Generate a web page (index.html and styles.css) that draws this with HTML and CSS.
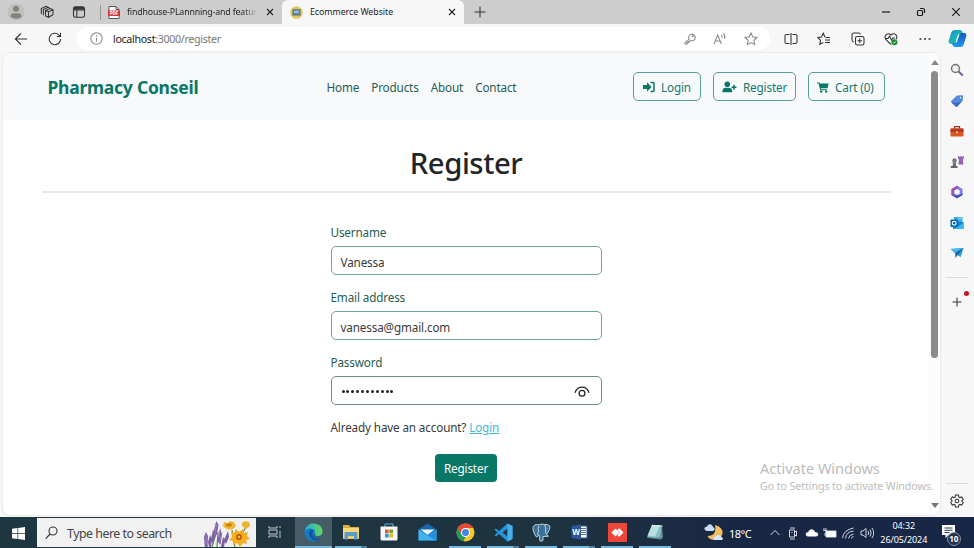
FILE: index.html
```html
<!DOCTYPE html>
<html lang="en">
<head>
<meta charset="utf-8">
<title>Ecommerce Website</title>
<link rel="stylesheet" href="styles.css">
</head>
<body>
<div class="screen">
  <header class="tabs">
    <div class="tab-tools">
      <svg width="18" height="18" viewBox="0 0 18 18"><circle cx="9" cy="9" r="8.5" fill="#c2c0bd"/><circle cx="9" cy="5.8" r="3" fill="#85827e"/><path d="M3.5 14q0-3.8 3-3.8h5q3 0 3 3.8-5 3.4-11 0z" fill="#85827e"/></svg>
      <svg width="14" height="14" viewBox="0 0 14 14" class="line"><path d="M5.5 5.500 10 3.500l3 1.200v5L8.500 12.300l-3-1.300zM5.500 5.500l3 1.200L13 4.700M8.500 6.700v5.500M3.400 10.200V4.600L8 2.300l1.500.5M1.300 9V3.600L6 1.200l1.500.5"/></svg>
      <svg width="14" height="14" viewBox="0 0 14 14" class="line"><rect x="1.500" y="1.700" width="11" height="10.600" rx="2"/><path d="M4.800 5v7M2 5h10" /><path d="M2 3.300h10" stroke-width="2.600"/></svg>
    </div>
    <div class="tab tab-old">
      <svg width="12" height="13" viewBox="0 0 12 13"><path d="M1 .5h7l3 3v9H1z" fill="#fff" stroke="#555"/><path d="M8 .5v3h3" fill="none" stroke="#555"/><path d="M0 4.500h12v5.500H0z" fill="#e02e35"/><text x="6" y="9" class="pdf">PDF</text></svg>
      <span class="tab-title old-title">findhouse-PLannning-and featur</span>
      <svg class="close" width="8" height="8" viewBox="0 0 8 8"><path d="m1 1 6 6M7 1 1 7"/></svg>
    </div>
    <div class="tab tab-current">
      <svg width="13" height="13" viewBox="0 0 13 13"><circle cx="6.500" cy="6.500" r="6.300" fill="#eac55e"/><rect x="2.800" y="3.500" width="7.400" height="5" rx=".5" fill="#4f86b7" stroke="#5b6771" stroke-width=".6"/><path d="M4 4.600h5v2.500H4z" fill="#8bc1df"/><path d="M2 9h9" stroke="#5d7180"/></svg>
      <span class="tab-title">Ecommerce Website</span>
      <svg class="close" width="8" height="8" viewBox="0 0 8 8"><path d="m1 1 6 6M7 1 1 7"/></svg>
    </div>
    <svg class="line newtab" width="12" height="12" viewBox="0 0 12 12"><path d="M6 .5v11M.5 6h11"/></svg>
    <div class="window-buttons">
      <svg width="10" height="10" viewBox="0 0 10 10"><path d="M1 5h8"/></svg>
      <svg width="10" height="10" viewBox="0 0 10 10"><rect x="1.500" y="3.500" width="5" height="5" rx="1"/><path d="M4 1.500h3q1.500 0 1.500 1.500v3"/></svg>
      <svg width="10" height="10" viewBox="0 0 10 10"><path d="m1.200 1.200 7.600 7.600M8.800 1.200 1.200 8.800"/></svg>
    </div>
  </header>

  <div class="toolbar">
    <svg class="line back" width="14" height="14" viewBox="0 0 14 14"><path d="M13 7H1.300M7 1.500 1.300 7 7 12.500"/></svg>
    <svg class="line reload" width="14" height="14" viewBox="0 0 14 14"><path d="M12.600 7A5.700 5.700 0 1 1 10.800 2.800L12.500 4.400M12.500.7v3.700H8.800"/></svg>
    <div class="address">
      <svg class="line grey" width="13" height="13" viewBox="0 0 13 13"><circle cx="6.500" cy="6.500" r="5.700"/><path d="M6.500 5.800v3.700M6.500 3.300v1.200"/></svg>
      <span class="url">localhost<span>:3000/register</span></span>
      <div class="address-icons">
        <svg class="line grey" width="12" height="12" viewBox="0 0 12 12"><path d="M5.100 6.100A3.300 3.300 0 1 1 6.600 7.500l-.9.900H4.600v1.200H3.300v1.300H1V9.800z"/><circle cx="8.800" cy="3.200" r=".5"/></svg>
        <svg class="line grey" width="14" height="12" viewBox="0 0 14 12"><path d="M1 11 4.700 2 8.400 11M2.300 8h4.800M8.200 2q1.300 1.300.8 3M10.300.7q2.500 2.400 1.300 5.300"/></svg>
        <svg class="line grey" width="14" height="14" viewBox="0 0 14 14"><path d="m7 1 1.800 3.900 4.200.5-3.100 2.900.8 4.300L7 10.500l-3.700 2.100.8-4.300L1 5.400l4.200-.5z"/></svg>
      </div>
    </div>
    <div class="browser-icons">
      <svg class="line" width="14" height="14" viewBox="0 0 14 14"><path d="M5.500 2.500h-3Q1 2.500 1 4v6q0 1.500 1.500 1.500h3M8.500 2.500h3Q13 2.500 13 4v6q0 1.500-1.500 1.500h-3M7 1v12"/></svg>
      <svg class="line" width="14" height="14" viewBox="0 0 14 14"><path d="M8 5 6.200 1.200 4.500 5l-3.800.5 2.800 2.800-.7 4L6.200 10.500M8.500 5.500H13M8 8h5M8 10.500h5"/></svg>
      <svg class="line" width="14" height="14" viewBox="0 0 14 14"><rect x="4.500" y="4.500" width="8.500" height="8.500" rx="1.800"/><path d="M8.700 6.500v4.500M6.500 8.700H11M2.800 10Q1 9.500 1 8V3q0-2 2-2h4.500q1.500 0 2 1.500"/></svg>
      <svg class="line" width="14" height="14" viewBox="0 0 14 14"><path d="M7 12.500 2 7.700Q0 5 2 2.800 4.500.6 7 3q2.500-2.400 5-.2 1.600 2 .2 4.400M1.500 6.500H4L5.500 4l2 4 1.500-2h2"/><circle cx="10.400" cy="10.300" r="3" fill="#168b28" stroke="none"/><path d="m9 10.300 1 1 1.800-2" stroke="#fff" stroke-width=".8"/></svg>
      <svg width="14" height="14" viewBox="0 0 14 14"><path d="M1.500 6.300h2v1.500h-2zM6 6.300h2v1.500H6zM10.500 6.300h2v1.500h-2z" fill="#333"/></svg>
      <svg class="copilot" width="19" height="19" viewBox="0 0 19 19"><defs><linearGradient id="cop" x2="1" y2="1"><stop stop-color="#1b88dc"/><stop offset=".5" stop-color="#17b6b3"/><stop offset="1" stop-color="#37bd7e"/></linearGradient><linearGradient id="cop2" x2="0" y2="1"><stop stop-color="#135bb9"/><stop offset="1" stop-color="#2399f1"/></linearGradient></defs><path d="M6.500 1H12q2 0 2.500 2l.6 2h-2.800q-2 0-2.600 2l-1.900 6q-.7 2-2.800 2H3Q-.1 15 .8 11.400L3.300 3.500Q4 1 6.500 1z" fill="url(#cop)"/><path d="M12.500 18H7q-2 0-2.500-2L4 14h2.700q2 0 2.600-2l1.900-6q.7-2 2.800-2h2q3.100 0 2.200 3.600l-2.500 7.900Q15 18 12.500 18z" fill="url(#cop2)"/><path d="m8 12 2.200-6.500h1L9 12z" fill="#e8ffff"/></svg>
    </div>
  </div>

  <div class="main">
    <div class="viewport">
      <main class="page">
        <nav class="navbar">
          <strong class="brand">Pharmacy Conseil</strong>
          <div class="links"><a>Home</a><a>Products</a><a>About</a><a>Contact</a></div>
          <div class="actions">
            <a class="outline login"><svg width="13" height="12" viewBox="0 0 13 12"><path d="M1 4h4V1.300L9.600 6 5 10.700V8H1z" fill="#087766"/><path d="M8.500 1.500H11q1 0 1 1v7q0 1-1 1H8.500" fill="none" stroke="#087766" stroke-width="1.500"/></svg><span>Login</span></a>
            <a class="outline register"><svg width="15" height="12" viewBox="0 0 15 12"><circle cx="5.300" cy="3.300" r="2.800" fill="#087766"/><path d="M.5 11.300V9.500Q.7 7 3.300 6.700h4Q10 7 10.200 9.500v1.800z" fill="#087766"/><path d="M12 3.800v5M9.500 6.300h5" stroke="#087766" stroke-width="1.500"/></svg><span>Register</span></a>
            <a class="outline cart"><svg width="12" height="11" viewBox="0 0 12 11"><path d="M0 .4h2.300l.3 1.200h9.100L10.500 6.200H3.700l.2 1h6.300l-.3 1H3.100L1.600 1.600H0z" fill="#087766"/><circle cx="4.200" cy="9.600" r="1.200" fill="#087766"/><circle cx="9.200" cy="9.600" r="1.200" fill="#087766"/></svg><span>Cart (0)</span></a>
          </div>
        </nav>
        <h1>Register</h1>
        <hr>
        <form class="form">
          <label>Username</label>
          <div class="field">Vanessa</div>
          <label>Email address</label>
          <div class="field">vanessa@gmail.com</div>
          <label>Password</label>
          <div class="field password"><span class="dots"><i></i><i></i><i></i><i></i><i></i><i></i><i></i><i></i><i></i><i></i><i></i></span><svg width="16" height="12" viewBox="0 0 16 12"><path d="M1 6.700Q3 1.200 8 1.200t7 5.500" fill="none" stroke="#222" stroke-width="1.300"/><circle cx="8" cy="7.200" r="2.900" fill="none" stroke="#222" stroke-width="1.300"/></svg></div>
          <p class="account">Already have an account? <a>Login</a></p>
          <button type="button">Register</button>
        </form>
      </main>
      <div class="scrollbar"><i class="up"></i><b></b><i class="down"></i></div>
      <div class="watermark"><strong>Activate Windows</strong><span>Go to Settings to activate Windows.</span></div>
    </div>
    <aside class="sidebar">
      <div class="apps">
        <svg width="14" height="14" viewBox="0 0 14 14"><circle cx="5.500" cy="5.500" r="4" fill="#eee" stroke="#777" stroke-width="1.500"/><path d="m8.500 8.500 4.300 4" stroke="#76569d" stroke-width="1.900"/></svg>
        <svg width="14" height="14" viewBox="0 0 14 14"><path d="m7 1.500 5.500-.3q.6 0 .6.600l-.4 5-5.500 5.800q-.7.600-1.300 0L1.200 8.200q-.6-.6 0-1.200z" fill="#578ad8"/><path d="M1.200 8.200 6 12.700q.6.300 1.200-.3l4.500-4.700L5.500 9z" fill="#3c67c4"/><circle cx="10.600" cy="3.600" r=".8" fill="#fff"/></svg>
        <svg width="14" height="14" viewBox="0 0 14 14"><path d="M4.500 4.500V2.700h5v1.800" fill="none" stroke="#9c3519" stroke-width="1.300"/><rect x=".5" y="4.500" width="13" height="8" rx="1" fill="#d95724"/><path d="M.5 5.500q0-1 1-1h11q1 0 1 1V8H.5z" fill="#b53c1c"/><path d="M6.200 7.200h1.600v2H6.200z" fill="#f9c693"/></svg>
        <svg width="14" height="14" viewBox="0 0 14 14"><path d="M8 1h1.300v1h1V1h1.300v1h1V1h1.200v3l-1 .5.600 5h-5l.6-5-1-.5z" fill="#9163be"/><circle cx="4.500" cy="5.500" r="2.200" fill="#777"/><path d="M2.500 7.500h4v1h-1l.7 2.500h1.300v2H.8v-2h1.700l.8-2.500h-.8z" fill="#666"/></svg>
        <svg width="14" height="14" viewBox="0 0 14 14"><path d="M7 .8 12.500 4v6L7 13.200 1.500 10V4z" fill="#7d7ceb"/><path d="M7 .8 1.500 4v6L4.500 11.700V5.500L9 2z" fill="#9157b9"/><path d="M1.500 10 7 13.200l5.500-3.200V8.500L9 10.500H4z" fill="#3948af"/><path d="m7 3.900 2.700 1.500v3.200L7 10.100 4.300 8.600V5.400z" fill="#fafafa"/></svg>
        <svg width="14" height="14" viewBox="0 0 14 14"><path d="M4 1h8.500v5H4z" fill="#34a7e7"/><path d="M8 1h4.500v3H8z" fill="#60c9ed"/><path d="M3 6h10.500v7H3z" fill="#1685ce"/><path d="m4 13 9.500-6v6z" fill="#35bbe9"/><rect x=".5" y="3.500" width="7.500" height="7.500" rx=".7" fill="#0966b4"/><circle cx="4.200" cy="7.200" r="1.900" fill="none" stroke="#fff" stroke-width="1.100"/></svg>
        <svg width="14" height="14" viewBox="0 0 14 14"><path d="m.5 3 13-1-2.800 9-3.900-2.200z" fill="#259bd6"/><path d="m.5 3 13-1-8.300 5z" fill="#45b9e7"/><path d="m5.200 7 8.300-5-5.600 6.500L5.500 12z" fill="#165e9e"/></svg>
      </div>
      <span class="divider"></span>
      <div class="add"><svg class="line" width="10" height="10" viewBox="0 0 10 10"><path d="M5 .5v9M.5 5h9"/></svg><i></i></div>
      <span class="divider low"></span>
      <svg class="line gear" width="14" height="14" viewBox="0 0 14 14"><path d="m5.500 1-.3 1.900-1.100.7L2.300 3 .8 5.500 2.200 7 .8 8.500 2.300 11l1.800-.6 1.100.7.3 1.900h3l.3-1.900 1.100-.7 1.800.6 1.500-2.500L11.800 7l1.400-1.500L11.700 3l-1.800.6-1.100-.7L8.500 1z"/><circle cx="7" cy="7" r="1.800"/></svg>
    </aside>
  </div>

  <footer class="taskbar">
    <div class="start"><svg width="13" height="13" viewBox="0 0 13 13"><path d="m0 1.800 5.500-.8v5.200H0zM6.200.9 13 0v6.200H6.200zM0 6.900h5.500V12L0 11.300zM6.200 6.900H13V13l-6.800-.9z" fill="#fff"/></svg></div>
    <div class="search">
      <svg width="13" height="14" viewBox="0 0 13 14"><circle cx="8" cy="5" r="4" fill="none" stroke="#333" stroke-width="1.100"/><path d="M5.100 8 .8 12.600" stroke="#333" stroke-width="1.200"/></svg>
      <span>Type here to search</span>
      <svg class="flowers" width="46" height="27" viewBox="0 0 46 27">
        <path d="m3 27-1-7M8 27l4-14M13 27l1-15M18 27l2-9M31 27l-3-17M38 14l4-7" stroke="#62883c" stroke-width="1.200" fill="none"/>
        <g fill="#7c61aa"><path d="m2 12 2 4-.5 11H.8L0 17zM6 15l2 5-1 7H5l-1-5zM12.500 1l2 4-1.500 9-3 5-1-6zM9 10l2 5-2 9-2-5zM16 8l2 6-1.500 11-3-4zM19 17l2 4-1 6h-3zM24 11l1 6-3 7-2-4z"/></g><path d="m11 3 2 3-2 3 1 3-2 3M2 15l1 3-2 3 2 3M16 11l-1 4 2 3-2 4" fill="none" stroke="#a68bc8" stroke-width=".8"/>
        <path d="m20 2 4 1 2-2 4 1 2 4-3 3-5 .5-5-3z" fill="#eeb62c"/><ellipse cx="25" cy="5" rx="3" ry="1.700" fill="#ce7b15"/>
        <path d="m38 3 3-2 4 1 1 4-4 3-4-3z" fill="#e8b42e"/>
        <path d="m27 12 3 1 2-4 3 3 4-3 1 4 4-1-1 4 3 3-4 1 1 4-4-1-3 4-3-4-4 2v-4l-4-1 3-3z" fill="#f5ae20"/><circle cx="35" cy="17" r="3" fill="#b85c10"/><circle cx="35" cy="17" r="1.300" fill="#efb641"/>
      </svg>
    </div>
    <div class="task-icons">
      <div><svg width="14" height="14" viewBox="0 0 14 14" fill="none" stroke="#b9c5cc"><path d="M1 1v2h8V1M1 13v-2h8v2M12 1v2M12 6v7"/><rect x="1" y="5" width="8" height="4"/></svg></div>
      <div class="open active"><svg width="19" height="19" viewBox="0 0 19 19"><defs><linearGradient id="eg" x2="1"><stop stop-color="#23a9e5"/><stop offset="1" stop-color="#65d957"/></linearGradient></defs><circle cx="9.500" cy="9.500" r="9" fill="#137bc7"/><path d="M.6 9Q2 .5 9.700.5 18 1 18.500 8.200q0 4.300-4.400 4.800-4 0-3.300-2 1.200-4.300-3-5.300Q3 5 .6 9z" fill="url(#eg)"/><path d="M8 6Q4 8.500 5.500 13q2 4 6.500 4.800 3-.4 5-3.100-5 2-7.700-1.200Q7.500 11 9 8z" fill="#1354a0"/><path d="M18.200 12.500q-3 1.500-5.500.7-2-.8-1.900-2.200l-1 .5q.2 2.800 3.400 3.700 2.800.4 4.200-.7z" fill="#465d68"/></svg></div>
      <div class="open multiple"><svg width="18" height="16" viewBox="0 0 18 16"><path d="M1 1h6l1.500 2H17v12H1z" fill="#dcae3d"/><path d="M1 4h16v10.500H1z" fill="#f9d977"/><path d="M3.500 8h11q1 0 1 1v6.500H12v-3.300H6v3.300H2.500V9q0-1 1-1z" fill="#599cc7"/></svg></div>
      <div><svg width="18" height="18" viewBox="0 0 18 18"><path d="M5 4V1h8v3" fill="none" stroke="#5eb5db"/><path d="M.5 3.500h17V16q0 1.500-1.500 1.500H2Q.5 17.500.5 16z" fill="#f7f7f7"/><path d="M5 6.500h3.700v3.700H5z" fill="#ea5732"/><path d="M9.300 6.500H13v3.700H9.300z" fill="#71a52b"/><path d="M5 10.800h3.700v3.700H5z" fill="#269bd6"/><path d="M9.300 10.800H13v3.700H9.300z" fill="#f2b51c"/></svg></div>
      <div><svg width="19" height="18" viewBox="0 0 19 18"><path d="m.5 6.500 9-6 9 6v11H.5z" fill="#1769ae"/><path d="M2.500 6.500h14L9.500 12z" fill="#e5f5fb"/><path d="m.5 6.500 9 6 9-6v11H.5z" fill="#43b2ed"/><path d="m9.500 12.500 9-6v11z" fill="#268cda"/></svg></div>
      <div class="open"><svg width="19" height="19" viewBox="0 0 19 19"><circle cx="9.500" cy="9.500" r="9" fill="#f6c927"/><path d="M1.700 5A9 9 0 0 1 17.300 5H9.500L5.600 11.800z" fill="#e34839"/><path d="M1.700 5 5.600 11.800l4 2.200-2.100 4.300A9 9 0 0 1 1.700 5z" fill="#249b55"/><circle cx="9.500" cy="9.500" r="4.500" fill="#fff"/><circle cx="9.500" cy="9.500" r="3.500" fill="#4384e7"/></svg></div>
      <div class="open multiple"><svg width="19" height="19" viewBox="0 0 19 19"><path d="M13.500.5 18.500 3v13l-5 2.500L5 11l-3 2.500L.5 12.300 3.500 9.500.5 6.700 2 5.500 5 8zm0 5-5 4 5 4z" fill="#2694da"/><path d="m13.500.5 5 2.500v13l-5 2.500z" fill="#45afeb"/></svg></div>
      <div class="open"><svg width="19" height="19" viewBox="0 0 19 19"><path d="M4.500 1.500Q.5 2 1 6.500q1.500 6 3.500 7.500 1.500 0 2.200-2l1 .7v4.800q1 1.500 3.300 0v-4l5.500-.3-2-1.500q4-6 3.300-8.700-2-2-5-1.500-3-1-5.300.3z" fill="#3b7199" stroke="#bdd2df"/><path d="M7 3Q5.500 5 6.500 8.500L5.500 12M12.500 2q2 2.500 1 7l1 2.500" fill="none" stroke="#bdd2df"/></svg></div>
      <div class="open multiple"><svg width="17" height="16" viewBox="0 0 17 16"><path d="M8 2h8v12H8z" fill="#fff" stroke="#355898"/><path d="M10 4.500h5M10 6.500h5M10 8.500h5M10 10.500h5" stroke="#5272ad"/><path d="m.5 2 9.500-1.500v15L.5 14z" fill="#2f559c"/><text x="5.200" y="10.800" class="word">W</text></svg></div>
      <div class="open"><svg width="19" height="19" viewBox="0 0 19 19"><path d="M0 0h19v19H0z" fill="#ee453d"/><path d="m7.500 5.500 4 4-4 4-4-4zM10.500 5.500h1l4 4-4 4h-1L9.500 12 12 9.500 9.500 7z" fill="#fff"/></svg></div>
      <div class="open"><svg width="19" height="18" viewBox="0 0 19 18"><path d="m6 2 10 .5-1 13L1 14.500z" fill="#81c2c8"/><path d="m6 2 8 .5-5 11-7.500-1z" fill="#b9e0df"/><path d="m16 2.500 1 12-2 2-12-1.500 11-1z" fill="#688b94"/><path d="M6 2.500 16.500 3" stroke="#effbfb" stroke-dasharray="1 .7" stroke-width="1.500"/></svg></div>
    </div>
    <div class="weather"><svg width="20" height="18" viewBox="0 0 20 18"><path d="M11 1q8 2 7.500 8.500-2 7.500-8.500 6.500-5-.5-6.500-4Q13 12 11 1z" fill="#f5bd5d"/><path d="M3 7Q0 6.500.5 4 1.500 2.500 3 2.800q1-3 4-2.300 2 1 2 2.500 2 .5 1.500 3L9 7z" fill="#c8dcf9"/><path d="M11 16q-2-.5-1-3l2-.7q1-2 3.500-1 2 .3 2 2 1.500.2 1.500 1.500l-1 1.200z" fill="#d8e8ff"/></svg><span>18°C</span></div>
    <div class="tray">
      <svg viewBox="0 0 14 14"><path d="m2.500 9 4.500-4.500L11.500 9"/></svg>
      <svg viewBox="0 0 14 14"><path d="M3.500 4h5v7h-5zM8.500 6l2-1v5l-2-1M4 2h5M4 13h5M5.500 6.500h1"/></svg>
      <svg viewBox="0 0 14 14"><path d="M3 10.500Q.5 10 .8 7.500 1.700 6 3.200 6q1-3 3.800-2.700 2.500.5 3 2.700 3 .2 3.200 2.500-.2 1.800-2.200 2z" fill="#fff" stroke="none"/></svg>
      <svg viewBox="0 0 14 14"><path d="M3 5h10v6H3z" fill="#fff"/><path d="M1 2v3M3 2v3M.5 4.500h3V6L2 7v3"/></svg>
      <svg viewBox="0 0 14 14"><path d="M1.500 12Q2.500 4 12.500 2M4.500 12.500q.5-6.500 8-7.500M7.500 12.500Q8 8.800 12.500 8M10.500 12.500q.3-1.600 2-2"/></svg>
      <svg viewBox="0 0 14 14"><path d="M1 5h2l3-2.500v9L3 9H1zM8 5q1.300 2 0 4M10 3.500q2.300 3.500 0 7M12 2q3.500 5 0 10"/></svg>
    </div>
    <div class="clock"><span>04:32</span><span>26/05/2024</span></div>
    <div class="notice"><svg width="13" height="13" viewBox="0 0 13 13"><path d="M0 0h13v10H6.500l-3 3v-3H0z" fill="#fff"/><path d="M2.500 3h8M2.500 5.300h8M2.500 7.500h5" stroke="#263653"/></svg><b>10</b></div>
  </footer>
</div>
</body>
</html>
```
FILE: styles.css
```css
* { box-sizing: border-box; }
html, body { margin: 0; width: 974px; height: 548px; overflow: hidden; }
body { font-family: "Noto Sans", "Open Sans", sans-serif; font-size: 11.7px; color: #3a3a3a; }
svg { display: block; flex: none; }
.line { fill: none; stroke: #333; stroke-width: 1.05; }
.grey { stroke: #888; }
.pdf { font-size: 4.5px; font-weight: 700; fill: #fff; text-anchor: middle; }
.word { font-size: 8px; font-weight: 700; fill: #fff; text-anchor: middle; }
.screen { display: grid; grid-template-rows: 24px 29px 464px 31px; width: 974px; height: 548px; background: #f7f7f7; }
.tabs { background: #cdcdcd; display: flex; align-items: center; white-space: nowrap; }
.tab-tools { width: 99px; height: 15px; padding-left: 7px; display: flex; gap: 16px; align-items: center; }
.tab-tools svg:nth-child(2) { margin-left: -1px; margin-right: 1px; }
.tab-tools svg:nth-child(3) { margin-left: 1px; }
.tab { height: 24px; display: flex; align-items: center; }
.tab-old { width: 183px; padding-left: 9px; gap: 7px; position: relative; }
.tab-old::before { content: ""; position: absolute; left: 1px; top: 5px; width: 1px; height: 15px; background: #999; }
.tab-title { font-size: 8.8px; line-height: 12px; letter-spacing: -.04px; color: #222; }
.old-title { width: 134px; letter-spacing: -.16px; background: linear-gradient(90deg, #222 88%, #bbb 98%); background-clip: text; color: transparent; }
.close { fill: none; stroke: #222; stroke-width: 1.1; margin-left: auto; }
.tab-old .close { margin-right: 8px; }
.tab-current { width: 182px; background: #f7f7f7; border-radius: 6px 6px 0 0; padding: 0 8px; gap: 7px; }
.newtab { margin-left: 10px; }
.window-buttons { margin-left: auto; display: flex; gap: 25px; margin-right: 13px; fill: none; stroke: #1c1c1c; stroke-width: 1.2; }
.toolbar { display: flex; align-items: center; }
.back { margin-left: 14px; }
.reload { margin-left: 20px; }
.address { margin-left: 14px; width: 694px; height: 23px; border-radius: 12px; background: #fff; display: flex; align-items: center; padding-left: 14px; }
.url { margin-left: 10px; font-size: 10.7px; letter-spacing: -.33px; color: #222; line-height: 14px; }
.url span { color: #777; }
.address-icons { margin-left: auto; display: flex; gap: 17px; align-items: center; padding-right: 12px; }
.browser-icons { width: 201px; padding-left: 4px; display: grid; grid-template-columns: repeat(6, 33.5px); align-items: center; justify-items: center; }
.copilot { margin-right: 2px; }
.main { display: flex; height: 464px; }
.viewport { width: 937px; height: 462px; margin-left: 3px; border-radius: 7px; background: #fff; display: flex; position: relative; overflow: hidden; box-shadow: 0 0 2px #ccc; }
.page { width: 926px; }
.navbar { height: 67px; background: #f7f9fb; display: flex; align-items: center; padding-left: 44.5px; padding-top: 1px; }
.brand { width: 279px; font-size: 17.5px; letter-spacing: -.25px; line-height: 26px; color: #087766; white-space: nowrap; }
.links { width: 306px; display: flex; gap: 12px; color: #1e5d50; letter-spacing: -.14px; }
.actions { display: flex; gap: 12px; margin-top: -1px; }
.outline { height: 29px; border: 1px solid #579f94; border-radius: 5px; display: flex; align-items: center; color: #14796b; gap: 6px; padding-left: 8.5px; padding-top: 1px; white-space: nowrap; letter-spacing: -.15px; }
.login { width: 68px; }
.register { width: 83px; }
.cart { width: 77px; }
h1 { margin: 20px 0 0; height: 46px; line-height: 46px; font-size: 29.3px; font-weight: 500; letter-spacing: -.45px; color: #212529; text-align: center; }
hr { width: 849px; height: 2px; margin: 5px 0 0 39px; border: 0; background: #e7e8e9; }
.form { width: 271px; margin: 30px 0 0 327.5px; display: flex; flex-direction: column; letter-spacing: -.14px; }
label { height: 18px; line-height: 18px; color: #1e5d50; margin-bottom: 5px; }
.field { height: 29px; border: 1px solid #70a39d; border-radius: 5px; margin-bottom: 13px; padding: 2px 9px 0; display: flex; align-items: center; color: #3a3a3a; }
.password { justify-content: space-between; border-color: #6c8f89; padding-right: 11px; }
.dots { display: flex; gap: 1.9px; padding-left: 1px; }
.dots i { width: 3px; height: 3px; border-radius: 50%; background: #222; }
.account { height: 18px; line-height: 18px; margin: 0; white-space: nowrap; }
.account a { color: #3dbcd5; text-decoration: underline; }
button { align-self: center; width: 62px; height: 28px; margin-top: 18px; border: 0; border-radius: 4px; padding: 0; background: #087766; color: #fff; font: inherit; letter-spacing: -.14px; }
.scrollbar { width: 11px; display: flex; flex-direction: column; align-items: center; padding-top: 7px; background: #fcfcfc; }
.scrollbar i { border: 4px solid transparent; }
.scrollbar .up { border-top: 0; border-bottom: 5px solid #888; }
.scrollbar b { width: 7px; height: 287px; margin-top: 6px; border-radius: 4px; background: #8b8b8b; }
.scrollbar .down { border-bottom: 0; border-top: 5px solid #777; margin: auto 0 7px; }
.watermark { position: absolute; left: 757px; top: 405px; display: flex; flex-direction: column; color: #bcbcbc; white-space: nowrap; font-size: 10.7px; letter-spacing: -.1px; line-height: 17px; }
.watermark strong { font-size: 14.5px; font-weight: 400; line-height: 20px; letter-spacing: 0; }
.sidebar { width: 34px; display: flex; flex-direction: column; align-items: center; position: relative; }
.apps { display: grid; grid-template-rows: repeat(7, 30.5px); align-items: center; padding-top: 2px; }
.divider { width: 22px; height: 1px; background: #dadada; margin-top: 8px; }
.add { margin-top: 19px; position: relative; }
.add i { position: absolute; width: 5px; height: 5px; border-radius: 50%; background: #c31520; left: 12px; top: -6px; }
.low { margin-top: auto; }
.gear { margin: 10px 0 9px; }
.taskbar { display: flex; background: linear-gradient(90deg, #1e3640, #1e3340 58%, #182743 75%, #172746); color: #fff; }
.start { width: 37px; padding-top: 1px; display: grid; place-items: center; }
.search { width: 219px; margin: 1px 0; background: #f1f1f1; display: flex; align-items: center; padding-left: 8px; color: #444; font-size: 12px; letter-spacing: -.5px; letter-spacing: -.52px; }
.search { letter-spacing: -.46px; padding-top: 1px; }
.search span { margin-left: 9px; width: 137px; white-space: nowrap; letter-spacing: -.5px; font-size: 12.4px; }
.flowers { align-self: end; }
.task-icons { display: grid; grid-template-columns: repeat(11, 38px); height: 31px; }
.task-icons div { margin: 0 3px; padding-top: 1px; display: grid; place-items: center; border-bottom: 2px solid transparent; }
.task-icons .open { border-bottom-color: #79b8e0; }
.task-icons .active { margin: 0 .5px; background: #465d68; }
.task-icons .multiple { border-image: linear-gradient(90deg, #79b8e0 80%, #527c98 81%) 1; border-top: 0; border-left: 0; border-right: 0; }
.weather { margin-left: 30px; padding-top: 1px; width: 63px; display: flex; gap: 5px; align-items: center; font-size: 11px; letter-spacing: -.48px; }
.tray { display: grid; grid-template-columns: repeat(6, 18.3px); align-items: center; justify-items: center; margin-left: -1px; padding-top: 1px; }
.tray svg { width: 14px; height: 14px; fill: none; stroke: #e3e7ed; stroke-width: .9; }
.clock { width: 56px; margin-left: 0; padding-top: 1px; display: flex; flex-direction: column; align-items: center; justify-content: center; font-size: 9px; line-height: 14px; letter-spacing: -.1px; }
.notice { margin-left: 10px; width: 22px; position: relative; display: flex; align-items: center; }
.notice svg { margin-bottom: 2px; }
.notice b { position: absolute; left: 5px; top: 15px; width: 14px; height: 14px; line-height: 12px; font-size: 8px; text-align: center; border: 1px solid #8992a2; border-radius: 50%; background: #26324b; }
```
